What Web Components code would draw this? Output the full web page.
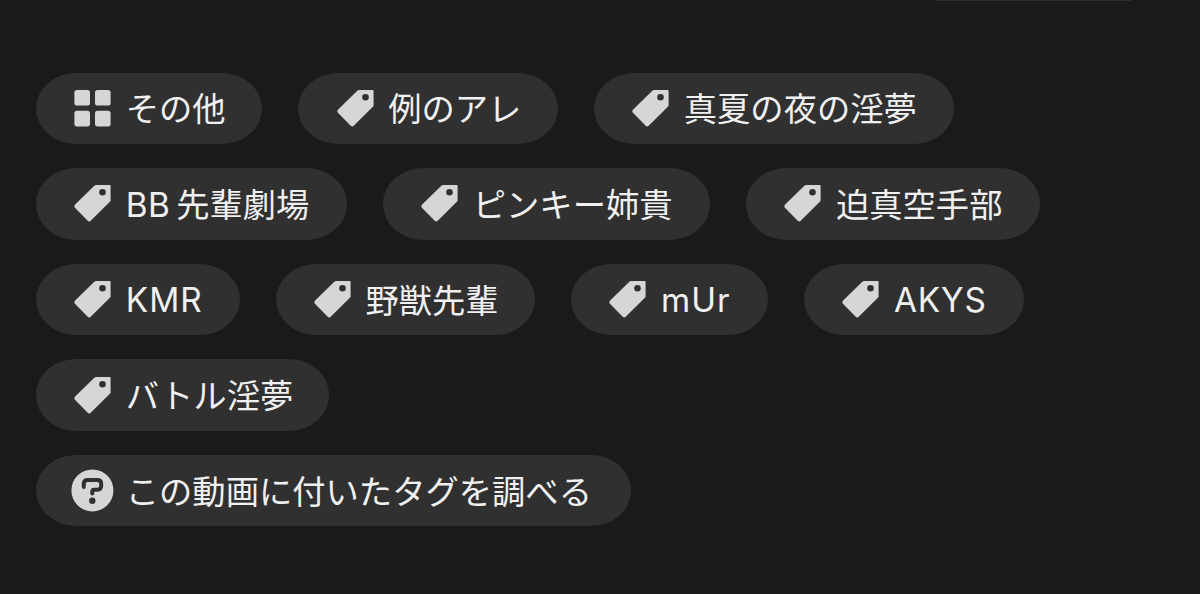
<!DOCTYPE html>
<html lang="ja">
<head>
<meta charset="utf-8">
<title>Tags</title>
<style>
  body {
    margin: 0;
    height: 594px;
    overflow: hidden;
    background: #1a1a1a;
    color: #f0f0f0;
    font-family: Inter, "Noto Sans CJK JP", sans-serif;
  }
  .latin {
    margin-right: 6px;
    letter-spacing: .4px;
  }
</style>
</head>
<body>
<tag-panel>
  <tag-chip icon="grid" style="--w: 226.4px">その他</tag-chip>
  <tag-chip icon="tag" style="--w: 259.6px">例のアレ</tag-chip>
  <tag-chip icon="tag" style="--w: 360px">真夏の夜の淫夢</tag-chip>
  <tag-chip icon="tag" style="--w: 311px"><span class="latin">BB</span>先輩劇場</tag-chip>
  <tag-chip icon="tag" style="--w: 327.2px">ピンキー姉貴</tag-chip>
  <tag-chip icon="tag" style="--w: 293.6px">迫真空手部</tag-chip>
  <tag-chip icon="tag" style="--w: 203.6px; --spacing: 1px; --shift: 0">KMR</tag-chip>
  <tag-chip icon="tag" style="--w: 259.6px">野獣先輩</tag-chip>
  <tag-chip icon="tag" style="--w: 197px; --spacing: 1px; --shift: 0">mUr</tag-chip>
  <tag-chip icon="tag" style="--w: 220px; --spacing: .9px; --shift: 0">AKYS</tag-chip>
  <tag-chip icon="tag" style="--w: 293.4px">バトル淫夢</tag-chip>
  <tag-chip slot="footer" icon="help" style="--w: 594.8px">この動画に付いたタグを調べる</tag-chip>
</tag-panel>

<script>
const icons = {
  grid: `
    <rect x="3.4" y="3" width="15.6" height="15.6" rx="2.6"/>
    <rect x="24" y="3" width="15.6" height="15.6" rx="2.6"/>
    <rect x="3.4" y="23.8" width="15.6" height="15.6" rx="2.6"/>
    <rect x="24" y="23.8" width="15.6" height="15.6" rx="2.6"/>`,
  tag: `
    <path fill-rule="evenodd" d="M25 3H38.7Q39.6 3 39.6 3.9V18.2Q39.6 18.9 39.1 19.4L19.7 38.7Q18.2 40.1 16.7 38.7L3.9 25.8Q2.5 24.3 3.9 22.8L23.6 3.6Q24.2 3 25 3ZM31.5 7A3.3 3.3 0 1 0 31.5 13.6A3.3 3.3 0 1 0 31.5 7Z"/>`,
  help: `
    <circle cx="21.4" cy="21.4" r="21"/>
    <path class="mark" d="M12.8 18V14.8Q12.8 10.9 16.7 10.9H26.3Q30.2 10.9 30.2 14.8V16.8Q30.2 20.7 26.3 20.7H23.3Q21.3 20.7 21.3 22.7V24.6"/>
    <circle class="dot" cx="21.3" cy="31.7" r="3.2"/>`
};

class TagChip extends HTMLElement {
  constructor() {
    super();
    this.attachShadow({ mode: "open" });
  }
  getTemplate() {
    const template = document.createElement("template");
    template.innerHTML = `
      <svg viewBox="0 0 43 43">${icons[this.getAttribute("icon")]}</svg>
      <span><slot></slot></span>
      ${this.getStyles()}
    `;
    return template;
  }
  getStyles() {
    return `
    <style>
    :host {
      display: flex;
      align-items: center;
      box-sizing: border-box;
      width: var(--w);
      height: 71.4px;
      padding-left: 35.2px;
      border-radius: 40px / 35.7px;
      background: #303030;
      font-size: 33.3px;
      line-height: 48px;
      letter-spacing: var(--spacing, 0);
      white-space: nowrap;
    }
    svg {
      flex: none;
      width: 43px;
      height: 43px;
      margin-right: 11.6px;
      fill: #d6d6d6;
    }
    span {
      padding-top: var(--shift, 2px);
    }
    .mark {
      fill: none;
      stroke: #303030;
      stroke-width: 4;
      stroke-linecap: round;
    }
    .dot {
      fill: #303030;
    }
    </style>
    `;
  }
  connectedCallback() {
    this.shadowRoot.appendChild(this.getTemplate().content.cloneNode(true));
  }
}

class TagPanel extends HTMLElement {
  constructor() {
    super();
    this.attachShadow({ mode: "open" });
  }
  getTemplate() {
    const template = document.createElement("template");
    template.innerHTML = `
      <div class="edge"></div>
      <div class="tags"><slot></slot></div>
      <slot name="footer"></slot>
      ${this.getStyles()}
    `;
    return template;
  }
  getStyles() {
    return `
    <style>
    :host {
      display: flex;
      flex-direction: column;
      padding: 0 36px;
    }
    .edge {
      align-self: flex-end;
      width: 196px;
      height: 1px;
      margin: 0 32px 71.7px 0;
      background: #2c2c2c;
    }
    .tags {
      display: flex;
      flex-wrap: wrap;
      gap: 24.2px 36px;
      margin-bottom: 24.2px;
    }
    </style>
    `;
  }
  connectedCallback() {
    this.shadowRoot.appendChild(this.getTemplate().content.cloneNode(true));
  }
}

customElements.define("tag-chip", TagChip);
customElements.define("tag-panel", TagPanel);
</script>
</body>
</html>
